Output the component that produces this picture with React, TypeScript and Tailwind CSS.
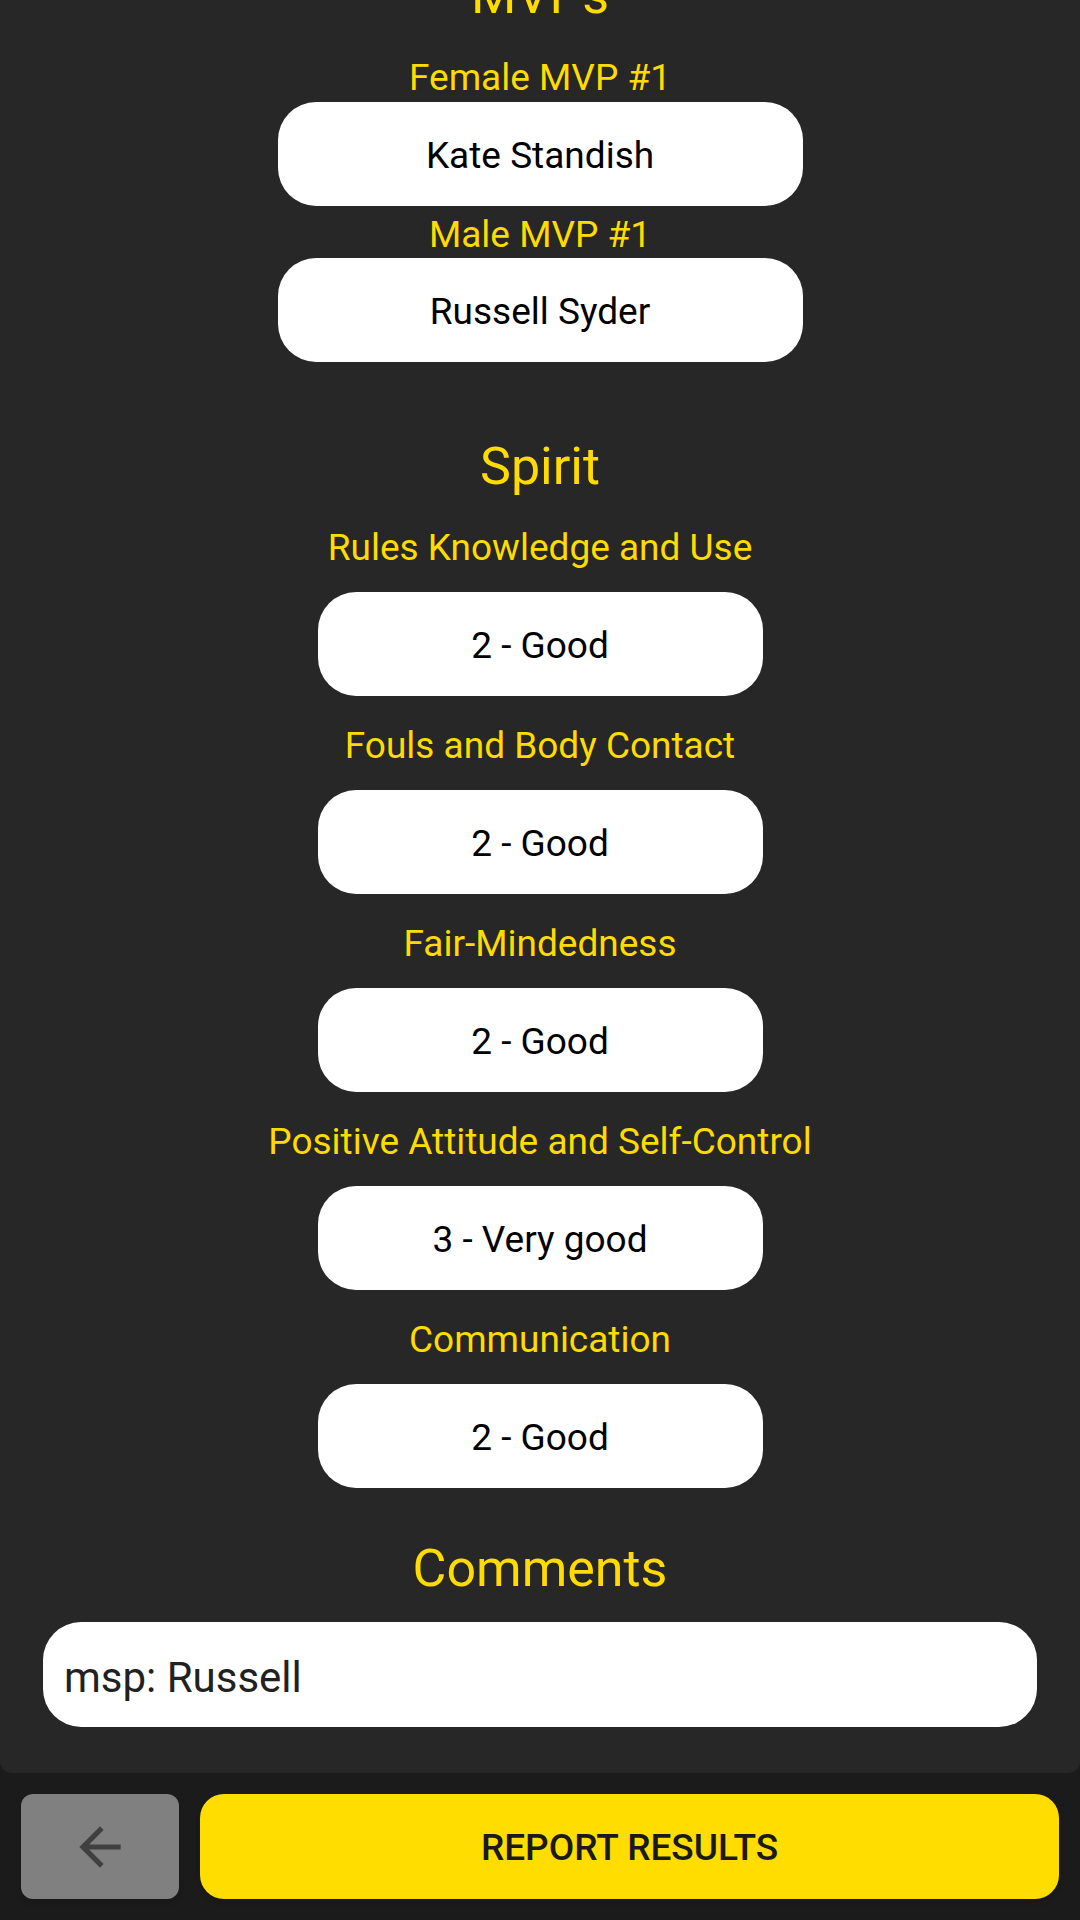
import { ReactNode } from "react"

const spirit = [
  { label: "Rules Knowledge and Use", value: "2 - Good" },
  { label: "Fouls and Body Contact", value: "2 - Good" },
  { label: "Fair-Mindedness", value: "2 - Good" },
  { label: "Positive Attitude and Self-Control", value: "3 - Very good" },
  { label: "Communication", value: "2 - Good" },
]

function SectionTitle({ children, className = "" }: { children: ReactNode; className?: string }) {
  return <h2 className={`text-center text-[52px] leading-[61px] text-[#ffdb00] ${className}`}>{children}</h2>
}

function Label({ children, className = "" }: { children: ReactNode; className?: string }) {
  return <p className={`text-center text-[37px] leading-[43px] text-[#ffdb00] ${className}`}>{children}</p>
}

function Field({ value, width }: { value: string; width: string }) {
  return (
    <div className={`mx-auto flex h-[104px] items-center justify-center rounded-[38px] bg-white pt-[4px] text-[37px] text-black ${width}`}>
      {value}
    </div>
  )
}

export default function App() {
  return (
    <main className="flex h-[1920px] w-[1080px] flex-col overflow-hidden bg-[#1b1b1b] font-['Roboto',sans-serif]">
      <section className="flex-1 overflow-hidden rounded-b-[12px] bg-[#272727]">
        {/* scrolled list, title of first section sits partly above the top edge */}
        <div className="-mt-[35px]">
          <SectionTitle>MVPs</SectionTitle>

          <Label className="mt-[30px]">Female MVP #1</Label>
          <div className="mt-[3px]">
            <Field value="Kate Standish" width="w-[525px]" />
          </div>
          <Label className="mt-[7px]">Male MVP #1</Label>
          <div className="mt-[2px]">
            <Field value="Russell Syder" width="w-[525px]" />
          </div>

          <SectionTitle className="mt-[74px]">Spirit</SectionTitle>
          <div className="mt-[1px]">
            {spirit.map((item) => (
              <div key={item.label} className="pt-[28px]">
                <Label>{item.label}</Label>
                <div className="mt-[23px]">
                  <Field value={item.value} width="w-[445px]" />
                </div>
              </div>
            ))}
          </div>

          <SectionTitle className="mt-[50px]">Comments</SectionTitle>
          <div className="mx-[43px] mt-[23px] flex h-[105px] items-center rounded-[38px] bg-white pl-[21px] pt-[5px] text-[42px] text-[#212121]">
            msp: Russell
          </div>
        </div>
      </section>

      <footer className="flex h-[147px] shrink-0 gap-[21px] p-[21px]">
        <button className="flex w-[158px] items-center justify-center rounded-[12px] bg-[#808080] shadow-md">
          <svg width="62" height="62" viewBox="0 0 24 24" fill="#404040">
            <path d="M20 11H7.83l5.59-5.59L12 4l-8 8 8 8 1.41-1.41L7.83 13H20v-2z" />
          </svg>
        </button>
        <button className="flex flex-1 items-center justify-center rounded-[24px] bg-[#ffdd00] pt-[2px] text-[37px] font-medium text-[#1a1a1a] shadow-md">
          REPORT RESULTS
        </button>
      </footer>
    </main>
  )
}
